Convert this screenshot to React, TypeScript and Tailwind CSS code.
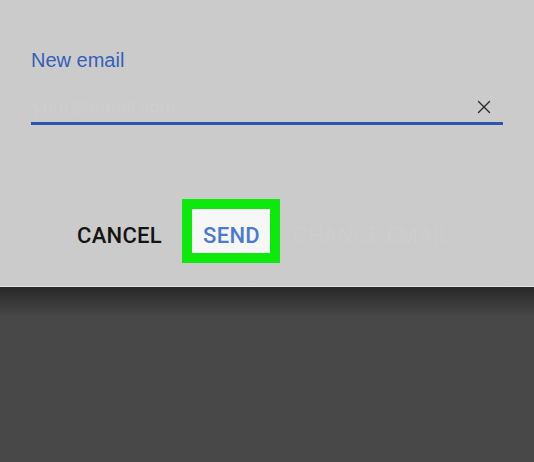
import { X } from 'lucide-react';

const App = () => {
    return (
        <div className="w-full h-[462px] flex flex-col overflow-hidden font-['Liberation_Sans',Arial,sans-serif]">
            {/* dialog */}
            <div className="h-[287px] bg-[#cbcbcb] border-b border-[#e2e2e2] flex flex-col">
                <div className="pl-[31px] pr-[31px] pt-[48px]">
                    <div className="text-[20px] leading-[24px] text-[#3560b8]">New email</div>
                    <div className="mt-[20px] h-[33px] flex items-center justify-between border-b-[3px] border-[#2a55b0] pl-[2px] pr-[8px]">
                        <span className="text-[19px] text-[#cecece]">your@email.com</span>
                        <X className="w-[22px] h-[22px] text-[#2b2b2b]" strokeWidth={1.5} />
                    </div>
                </div>

                <div className="mt-[74px] flex items-start pl-[77px]">
                    <span className="mt-[20px] text-[22px] font-medium tracking-[0.3px] text-[#141414] font-['Roboto',sans-serif]">CANCEL</span>
                    <div className="ml-[20px] w-[98px] h-[64px] border-[10px] border-[#0de80d] bg-[#f7f7f7] flex items-start pl-[11px] pt-[10px]">
                        <span className="text-[22px] font-medium tracking-[0.3px] text-[#4a7bd0] font-['Roboto',sans-serif]">SEND</span>
                    </div>
                    <span className="ml-[13px] mt-[20px] text-[22px] font-medium text-[#cdcdcd] font-['Roboto',sans-serif]">CHANGE EMAIL</span>
                </div>
            </div>

            {/* backdrop */}
            <div className="flex-1 bg-[#484848]">
                <div className="h-[30px] bg-gradient-to-b from-[#282828] to-[#484848]" />
            </div>
        </div>
    );
};

export default App;
